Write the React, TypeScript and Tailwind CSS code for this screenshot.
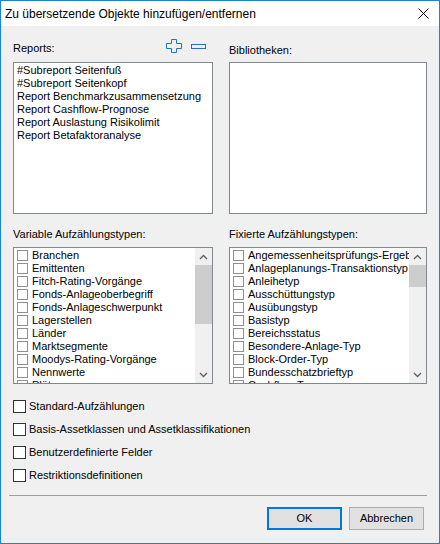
import React from 'react';

const reports = [
  '#Subreport Seitenfuß',
  '#Subreport Seitenkopf',
  'Report Benchmarkzusammensetzung',
  'Report Cashflow-Prognose',
  'Report Auslastung Risikolimit',
  'Report Betafaktoranalyse',
];

const variableTypes = [
  'Branchen',
  'Emittenten',
  'Fitch-Rating-Vorgänge',
  'Fonds-Anlageoberbegriff',
  'Fonds-Anlageschwerpunkt',
  'Lagerstellen',
  'Länder',
  'Marktsegmente',
  'Moodys-Rating-Vorgänge',
  'Nennwerte',
  'Plätze',
];

const fixedTypes = [
  'Angemessenheitsprüfungs-Ergebnis',
  'Anlageplanungs-Transaktionstyp',
  'Anleihetyp',
  'Ausschüttungstyp',
  'Ausübungstyp',
  'Basistyp',
  'Bereichsstatus',
  'Besondere-Anlage-Typ',
  'Block-Order-Typ',
  'Bundesschatzbrieftyp',
  'Cashflow-Typ',
];

const options = [
  'Standard-Aufzählungen',
  'Basis-Assetklassen und Assetklassifikationen',
  'Benutzerdefinierte Felder',
  'Restriktionsdefinitionen',
];

function Chevron({ up }: { up?: boolean }) {
  return (
    <svg width="9" height="6" viewBox="0 0 9 6">
      <path
        d={up ? 'M1 5 L4.5 1.5 L8 5' : 'M1 1 L4.5 4.5 L8 1'}
        fill="none"
        stroke="#606060"
        strokeWidth="1.3"
      />
    </svg>
  );
}

function ScrollBar({ thumbTop, thumbHeight }: { thumbTop: number; thumbHeight: number }) {
  return (
    <div className="w-[17px] h-full bg-[#f0f0f0] flex flex-col">
      <div className="h-[17px] flex items-center justify-center">
        <Chevron up />
      </div>
      <div className="flex-1 flex flex-col">
        <div style={{ height: thumbTop }} />
        <div className="bg-[#cdcdcd] mx-0" style={{ height: thumbHeight }} />
      </div>
      <div className="h-[17px] flex items-center justify-center">
        <Chevron />
      </div>
    </div>
  );
}

function CheckList({ items, thumbTop, thumbHeight }: { items: string[]; thumbTop: number; thumbHeight: number }) {
  return (
    <div className="h-[137px] border border-[#828790] bg-white flex overflow-hidden">
      <div className="flex-1 min-w-0 overflow-hidden pt-[1px]">
        {items.map(item => (
          <div key={item} className="h-[13px] flex items-center pl-[3px] whitespace-nowrap">
            <span className="w-[11px] h-[11px] border border-[#8f8f8f] bg-white shrink-0" />
            <span className="ml-[4px] leading-[13px]">{item}</span>
          </div>
        ))}
      </div>
      <ScrollBar thumbTop={thumbTop} thumbHeight={thumbHeight} />
    </div>
  );
}

export default function App() {
  return (
    <div className="w-[440px] h-[544px] border border-[#1883d7] bg-[#f0f0f0] flex flex-col text-[11px] text-black font-['Liberation_Sans',Arial,sans-serif]">
      {/* Title bar */}
      <div className="h-[25px] bg-white flex items-center justify-between pl-[4px] pr-[10px] shrink-0">
        <span className="text-[12px] font-['Liberation_Sans',sans-serif]">Zu übersetzende Objekte hinzufügen/entfernen</span>
        <svg width="11" height="11" viewBox="0 0 11 11">
          <path d="M0.5 0.5 L10.5 10.5 M10.5 0.5 L0.5 10.5" stroke="#000" strokeWidth="1" />
        </svg>
      </div>

      <div className="flex-1 flex flex-col px-[12px]">
        {/* Reports / Bibliotheken */}
        <div className="grid grid-cols-[200px_198px] gap-x-[16px]">
          <div>
            <div className="h-[36px] pt-[16px] flex justify-between">
              <span className="leading-[13px]">Reports:</span>
              <div className="flex gap-[9px] -mt-[3px] mr-[7px]">
                <svg width="16" height="14" viewBox="0 0 16 14">
                  <path
                    d="M5.5 0.5 H10.5 V4.5 H15.5 V9.5 H10.5 V13.5 H5.5 V9.5 H0.5 V4.5 H5.5 Z"
                    fill="none"
                    stroke="#2a6fc4"
                  />
                </svg>
                <svg width="15" height="14" viewBox="0 0 15 14">
                  <rect x="0.5" y="5.5" width="14" height="4" fill="none" stroke="#2a6fc4" />
                </svg>
              </div>
            </div>
            <div className="h-[152px] border border-[#828790] bg-white pt-[1px] px-[3px] overflow-hidden">
              {reports.map(r => (
                <div key={r} className="h-[13px] leading-[13px] whitespace-nowrap">{r}</div>
              ))}
            </div>
          </div>
          <div>
            <div className="h-[36px] pt-[16px]">
              <span className="leading-[13px]">Bibliotheken:</span>
            </div>
            <div className="h-[152px] border border-[#828790] bg-white" />
          </div>
        </div>

        {/* Aufzählungstypen */}
        <div className="grid grid-cols-[200px_198px] gap-x-[16px]">
          <div>
            <div className="h-[33px] pt-[14px] leading-[13px]">Variable Aufzählungstypen:</div>
            <CheckList items={variableTypes} thumbTop={0} thumbHeight={59} />
          </div>
          <div>
            <div className="h-[33px] pt-[14px] leading-[13px]">Fixierte Aufzählungstypen:</div>
            <CheckList items={fixedTypes} thumbTop={0} thumbHeight={22} />
          </div>
        </div>

        {/* Options */}
        <div className="mt-[16px] flex flex-col gap-[10px]">
          {options.map(o => (
            <label key={o} className="h-[13px] flex items-center">
              <span className="w-[13px] h-[13px] border border-[#333] bg-white shrink-0" />
              <span className="ml-[3px] leading-[13px]">{o}</span>
            </label>
          ))}
        </div>

        <div className="mt-[13px] -ml-[4px] h-px bg-[#a0a0a0]" />

        <div className="mt-[11px] flex justify-end gap-[7px] mr-[3px]">
          <button className="w-[75px] h-[23px] bg-[#e1e1e1] border-2 border-[#0078d7] text-[11px]">OK</button>
          <button className="w-[75px] h-[23px] bg-[#e1e1e1] border border-[#adadad] text-[11px]">Abbrechen</button>
        </div>
      </div>
    </div>
  );
}
